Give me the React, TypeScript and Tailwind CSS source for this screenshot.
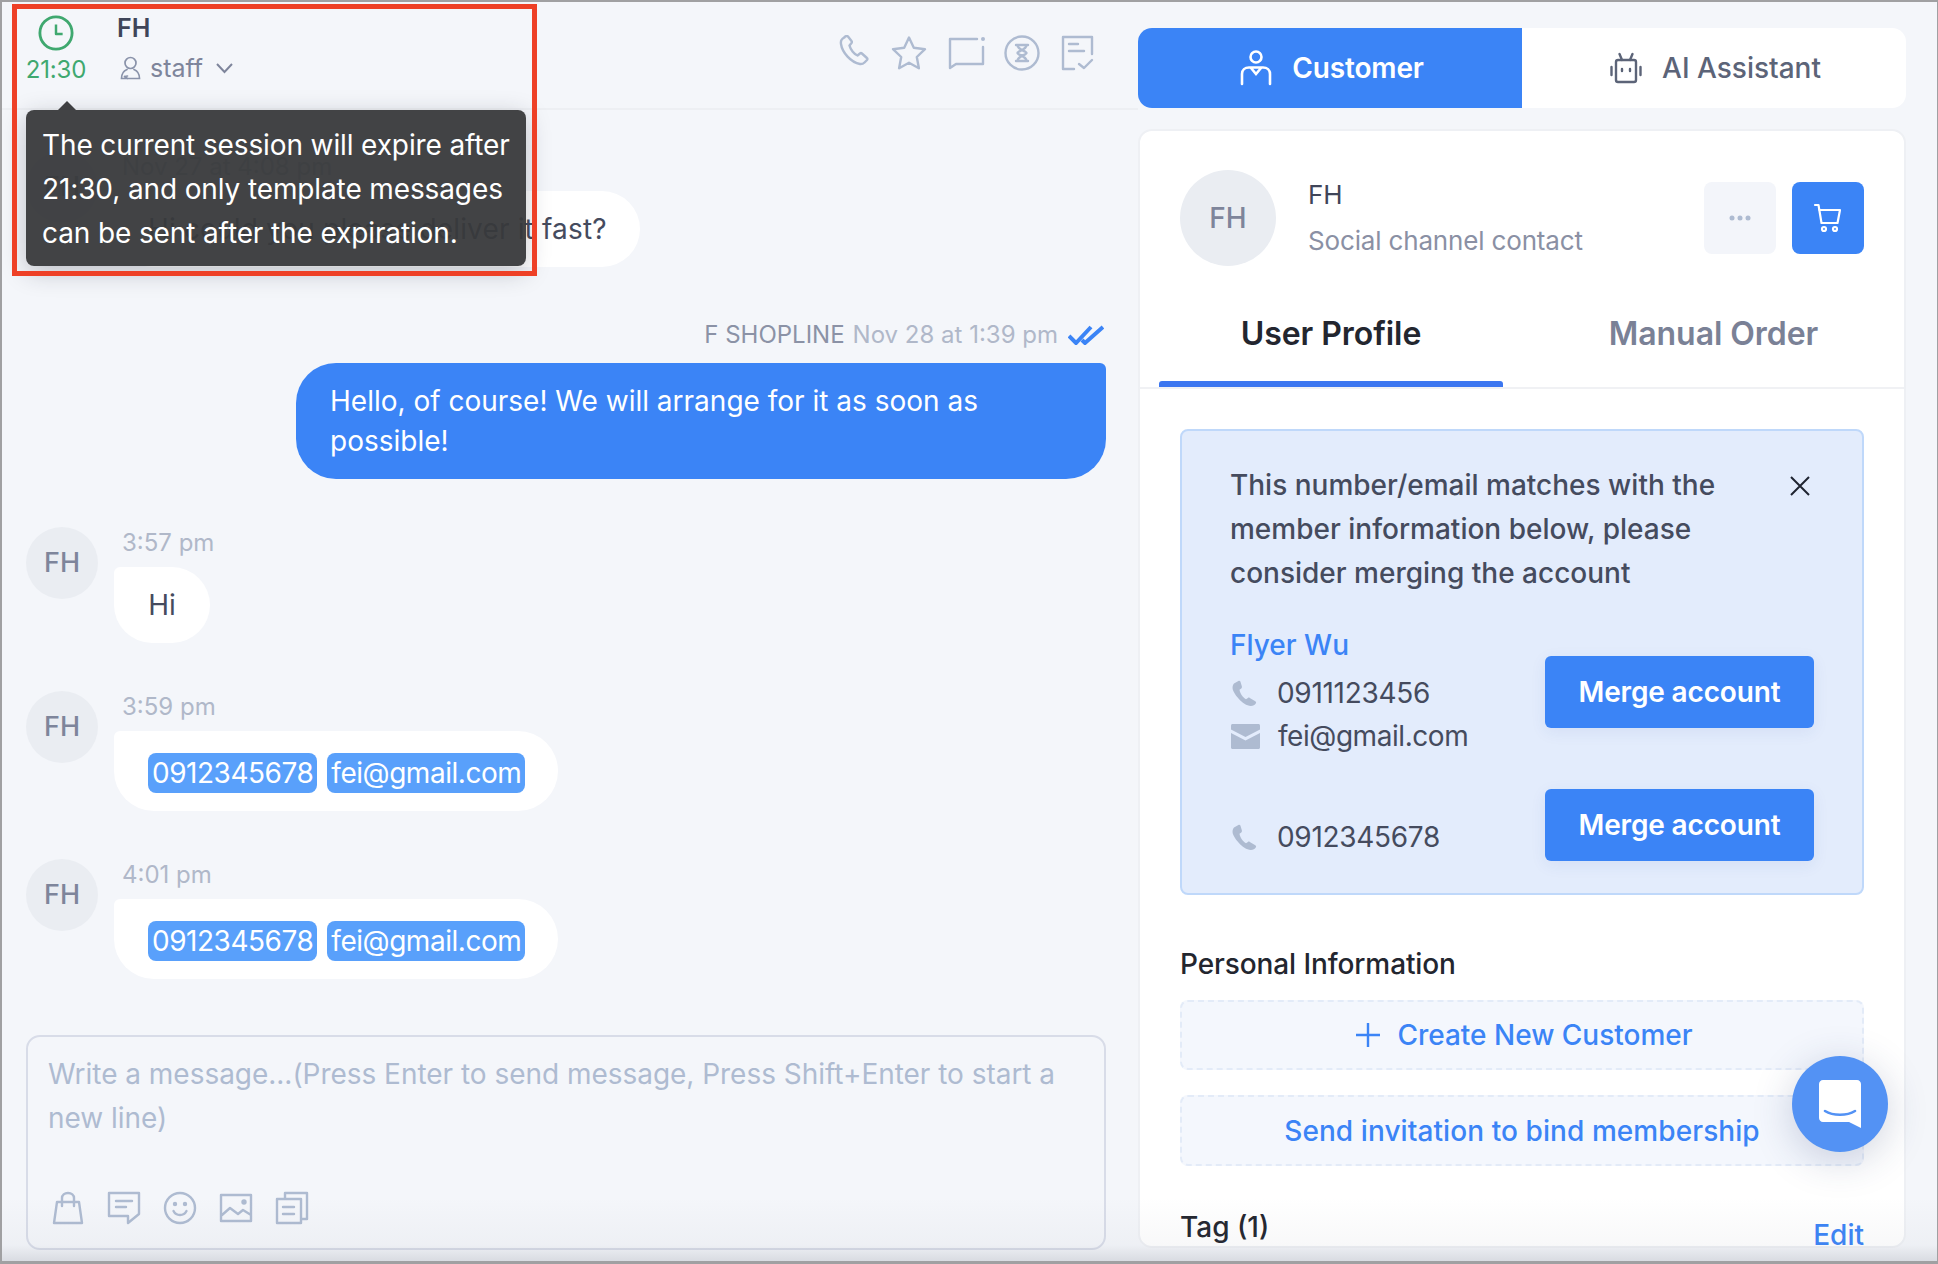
import React from 'react';

const LineIcon: React.FC<{ className?: string; box?: string; children: React.ReactNode }> = ({ className, box = '0 0 32 32', children }) => (
    <svg className={className} viewBox={box} fill="none" stroke="currentColor" strokeWidth="2.4" strokeLinecap="round" strokeLinejoin="round" aria-hidden="true">
        {children}
    </svg>
);

const SolidPhone: React.FC<{ className?: string }> = ({ className }) => (
    <svg className={className} viewBox="0 0 26 26" fill="#aebbd1" aria-hidden="true">
        <path d="M2 3.6 6.4 1c.8-.4 1.600-.2 2 .6l1.500 5c.2.800 0 1.400-.6 1.900l-1.800 1.300c.6 3.700 3.400 7.800 6.500 9.500l1.900-1.400c.6-.4 1.300-.4 1.900 0l5.500 3.300c.8.500 1 1.300.6 2-1 1.700-2.800 2.800-5 2.800C10.500 25.900 1 13 .6 8.600.4 6.500.9 4.700 2 3.600Z" />
    </svg>
);

const Avatar = () => (
    <div className="flex h-[72px] w-[72px] shrink-0 items-center justify-center rounded-full bg-[#eaedf2] text-[27px] font-medium text-[#7e859b]">FH</div>
);

const Chip: React.FC<{ children: React.ReactNode }> = ({ children }) => (
    <span className="flex h-10 items-center rounded-lg bg-[#59a0fb] px-1 text-[28px] tracking-[-0.47px] text-white">{children}</span>
);

const IncomingMessage: React.FC<{ time: string; className?: string; children: React.ReactNode }> = ({ time, className, children }) => (
    <div className={`flex gap-[16px] ${className ?? ''}`}>
        <Avatar />
        <div>
            <div className="h-8 pl-2 text-[24px] leading-8 text-[#b0b8c9]">{time}</div>
            {children}
        </div>
    </div>
);

const ContactChips = () => (
    <div className="mt-2 flex h-20 w-[444px] items-center gap-[10px] rounded-[40px] rounded-tl-md bg-white pt-1 pl-[34px]">
        <Chip>0912345678</Chip>
        <Chip>fei@gmail.com</Chip>
    </div>
);

const MergeButton = () => (
    <button className="flex h-[72px] w-[269px] items-center justify-center rounded-md bg-[#3b84f6] text-[28px] font-semibold tracking-[-0.15px] text-white shadow-[0_4px_16px_rgba(40,80,160,0.08)]">
        Merge account
    </button>
);

export default function App() {
    return (
        <div className="relative flex h-[1264px] w-[1938px] overflow-hidden border-t-2 border-r border-b-[3px] border-l-2 border-[#a0a0a2] bg-[#f4f6fa] font-['Inter',sans-serif] text-[#454b5e]">
            {/* chat column */}
            <div className="flex w-[1136px] shrink-0 flex-col">
                <div className="flex h-[108px] shrink-0 border-b-2 border-[#edeff3] pr-[44px] pl-[25px]">
                    <div className="flex w-[58px] flex-col items-center pt-[13px]">
                        <svg className="h-[36px] w-[36px] text-[#3fa86f]" viewBox="0 0 38 38" fill="none" stroke="currentColor" strokeWidth="3" aria-hidden="true">
                            <circle cx="19" cy="19" r="17" />
                            <path d="M19 10v10h7" strokeWidth="2.600" strokeLinejoin="round" />
                        </svg>
                        <div className="mt-[3px] text-[24px] leading-8 tracking-[-0.2px] text-[#3fa86f]">21:30</div>
                    </div>
                    <div className="ml-[32px] pt-[10px]">
                        <div className="text-[25px] leading-8 font-semibold text-[#3f4559]">FH</div>
                        <div className="mt-[8px] flex items-center text-[25px] leading-8 text-[#7e859b]">
                            <svg className="mr-[9px] ml-[3px] h-[24px] w-[21px] text-[#8a93aa]" viewBox="0 0 21 24" fill="none" stroke="currentColor" strokeWidth="1.700" strokeLinecap="round" aria-hidden="true">
                                <circle cx="10.500" cy="7" r="5.500" />
                                <path d="M7 13.500C3.500 15 1.500 18.500 1.500 22.500h18C19.500 18.500 17.500 15 14 13.500M4.500 20.500l3 2M7.500 20l-3 .5" />
                            </svg>
                            staff
                            <svg className="ml-[12px] h-[12px] w-[19px] text-[#7e859b]" viewBox="0 0 19 12" fill="none" stroke="currentColor" strokeWidth="2" aria-hidden="true">
                                <path d="M2 2l7.500 8L17 2" />
                            </svg>
                        </div>
                    </div>
                    <div className="ml-auto flex items-start gap-[21px] pt-[33px] text-[#aebbd1]">
                        <LineIcon className="h-[32px] w-[32px]">
                            <path d="M6.500 2.500c-2.500 1-4 3.500-3.500 6.500 1.200 8.500 10 18.500 19 20 2 .2 3.500-.5 4.500-1.500l2.500-2.500c.6-.7.5-1.500-.1-2l-5-4.500c-.6-.5-1.300-.5-1.900 0l-2.500 2c-3.500-1.500-7-6-8-10l2-2.500c.5-.7.5-1.400 0-2l-3.500-4.500c-1-.7-2-.8-3.500.5Z" />
                        </LineIcon>
                        <LineIcon className="h-[36px] w-[36px]" box="0 0 36 36">
                            <path d="M18 2.500l4.800 10.200 11.200 1.500-8.200 7.800 2.100 11.200L18 27.700 8.100 33.200l2.100-11.200L2 14.200l11.200-1.500L18 2.500Z" />
                        </LineIcon>
                        <LineIcon className="mr-[-2px] h-[36px] w-[37px]" box="0 0 37 36">
                            <path d="M29 4H2v29l6-4h27V12" />
                            <circle cx="35" cy="4" r="2" fill="currentColor" stroke="none" />
                        </LineIcon>
                        <LineIcon className="h-[36px] w-[36px]" box="0 0 36 36">
                            <circle cx="18" cy="18" r="16.500" />
                            <path d="M12 10h12M12 26h12M13.500 10c0 5 9 6 9 8s-9 3-9 8M22.500 10c0 5-9 6-9 8s9 3 9 8" />
                        </LineIcon>
                        <LineIcon className="h-[36px] w-[33px]" box="0 0 33 36">
                            <path d="M31 19V2H2v32h11M8 9h9M8 16h15M18 29l5 4 8-8" />
                        </LineIcon>
                    </div>
                </div>

                <div className="flex flex-1 flex-col pr-[32px] pl-[24px]">
                    <IncomingMessage time="Nov 27 at 4:08 pm" className="mt-[41px]">
                        <div className="mt-2 flex h-[76px] w-[526px] items-center rounded-[38px] rounded-tl-md bg-white pl-[34px] text-[28px] tracking-[0.16px]">Hi could you please deliver it fast?</div>
                    </IncomingMessage>

                    <div className="mt-[52px] flex h-8 items-center justify-end text-[24px] text-[#b0b8c9]">
                        <span className="text-[#8b92a6]">F SHOPLINE</span>
                        <span className="ml-2">Nov 28 at 1:39 pm</span>
                        <svg className="mr-[2px] ml-[10px] h-[20px] w-[36px] text-[#3b84f6]" viewBox="0 0 36 20" fill="none" stroke="currentColor" strokeWidth="4" aria-hidden="true">
                            <path d="M1 11l7 7L23 2M14 15l3 3L35 2" />
                        </svg>
                    </div>
                    <div className="mt-3 ml-auto h-[116px] w-[810px] rounded-[40px] rounded-tr-md bg-[#3b84f6] px-[34px] pt-[18px] text-[28px] leading-10 text-white">
                        Hello, of course! We will arrange for it as soon as possible!
                    </div>

                    <IncomingMessage time="3:57 pm" className="mt-12">
                        <div className="mt-2 flex h-[76px] w-[96px] items-center justify-center rounded-[38px] rounded-tl-md bg-white text-[28px]">Hi</div>
                    </IncomingMessage>
                    <IncomingMessage time="3:59 pm" className="mt-12">
                        <ContactChips />
                    </IncomingMessage>
                    <IncomingMessage time="4:01 pm" className="mt-12">
                        <ContactChips />
                    </IncomingMessage>

                    <div className="mt-14 h-[215px] rounded-[14px] border-2 border-[#d8dce8] pt-[15px] pr-[20px] pl-[20px]">
                        <div className="text-[28px] leading-[44px] tracking-[-0.03px] text-[#aebbd1]">
                            Write a message...(Press Enter to send message, Press Shift+Enter to start a new line)
                        </div>
                        <div className="mt-[51px] flex items-center gap-[22px] pl-[3px] text-[#aebbd1]">
                            <LineIcon className="h-[34px] w-[34px]" box="0 0 34 34">
                                <path d="M6 11h22l3 21H3L6 11ZM11 15V7c0-3 2.500-5 6-5s6 2 6 5v8" />
                            </LineIcon>
                            <LineIcon className="h-[34px] w-[34px]" box="0 0 34 34">
                                <path d="M2 2h30v21l-11 9v-7H2V2ZM9 10h16M9 16h10" />
                            </LineIcon>
                            <LineIcon className="h-[34px] w-[34px]" box="0 0 34 34">
                                <circle cx="17" cy="17" r="15" />
                                <path d="M10.500 20c1.500 3 3.800 4 6.500 4s5-1 6.500-4" />
                                <circle cx="12" cy="13" r="1" fill="currentColor" />
                                <circle cx="22" cy="13" r="1" fill="currentColor" />
                            </LineIcon>
                            <LineIcon className="h-[34px] w-[34px]" box="0 0 34 34">
                                <path d="M2 4h30v26H2V4ZM3 24l8-7 8 6 5-4 8 5" />
                                <circle cx="25" cy="11" r="1.500" fill="currentColor" />
                            </LineIcon>
                            <LineIcon className="h-[34px] w-[34px]" box="0 0 34 34">
                                <path d="M10 8V2h22v26h-6M2 8h24v24H2V8ZM8 16h11M8 23h11" />
                            </LineIcon>
                        </div>
                    </div>
                </div>
            </div>

            {/* customer column */}
            <div className="flex w-[768px] shrink-0 flex-col pt-[26px]">
                <div className="flex h-20 shrink-0 overflow-hidden rounded-[14px] bg-white">
                    <div className="flex w-[384px] items-center justify-center gap-[20px] bg-[#3b84f6] pl-1 text-[28px] font-semibold tracking-[-0.12px] text-white">
                        <svg className="h-[36px] w-[32px]" viewBox="0 0 32 36" fill="none" stroke="currentColor" strokeWidth="2.600" strokeLinecap="round" aria-hidden="true">
                            <circle cx="16" cy="7" r="5.500" />
                            <path d="M2 34V24c0-4 3-6.500 7-6.500h14c4 0 7 2.500 7 6.500v10M11 18l5 6 5-6" />
                        </svg>
                        Customer
                    </div>
                    <div className="flex flex-1 items-center justify-center gap-[20px] pl-[3px] text-[28px] font-medium text-[#5c6478]">
                        <svg className="h-[32px] w-[32px]" viewBox="0 0 32 32" fill="none" stroke="currentColor" strokeWidth="2.400" strokeLinecap="round" aria-hidden="true">
                            <rect x="6" y="8" width="20" height="22" rx="2" />
                            <path d="M12 8 9.500 2M20 8l2.500-6M1.500 15v8M30.500 15v8M12 17v2M20 17v2" />
                        </svg>
                        AI Assistant
                    </div>
                </div>

                <div className="mt-[21px] h-[1119px] shrink-0 overflow-hidden rounded-[14px] border-2 border-[#eef0f4] bg-white px-[40px] pt-[39px]">
                    <div className="flex h-24 items-center">
                        <div className="flex h-24 w-24 items-center justify-center rounded-full bg-[#eaedf2] text-[28px] font-medium text-[#7e859b]">FH</div>
                        <div className="ml-8">
                            <div className="text-[26px] leading-[46px] text-[#3f4559]">FH</div>
                            <div className="text-[26px] leading-[46px] tracking-[-0.16px] text-[#8a90a4]">Social channel contact</div>
                        </div>
                        <div className="ml-auto flex gap-4">
                            <div className="flex h-[72px] w-[72px] items-center justify-center rounded-lg bg-[#f3f5fa] text-[#aebbd1]">
                                <svg className="h-[6px] w-[22px]" viewBox="0 0 22 6" fill="currentColor" aria-hidden="true">
                                    <circle cx="3" cy="3" r="2.500" />
                                    <circle cx="11" cy="3" r="2.500" />
                                    <circle cx="19" cy="3" r="2.500" />
                                </svg>
                            </div>
                            <div className="flex h-[72px] w-[72px] items-center justify-center rounded-lg bg-[#3b84f6] text-white">
                                <svg className="h-[30px] w-[30px]" viewBox="0 0 30 30" fill="none" stroke="currentColor" strokeWidth="2.200" strokeLinecap="round" strokeLinejoin="round" aria-hidden="true">
                                    <path d="M2 2h3.500l3 18h16l2.500-13H6" />
                                    <circle cx="11" cy="26" r="2" />
                                    <circle cx="22" cy="26" r="2" />
                                </svg>
                            </div>
                        </div>
                    </div>

                    <div className="mx-[-40px] mt-[35px] flex border-b-2 border-[#f0f1f4] pl-[19px]">
                        <div className="w-[344px]">
                            <div className="h-[64px] pt-[1px] text-center text-[32px] leading-[64px] font-semibold tracking-[-0.05px] text-[#23262f]">User Profile</div>
                            <div className="mt-4 h-[6px] rounded-t-[3px] bg-[#3b76f0]" />
                        </div>
                        <div className="ml-5 h-[64px] flex-1 pt-[1px] text-center text-[32px] leading-[64px] font-semibold tracking-[-0.05px] text-[#7a8196]">Manual Order</div>
                    </div>

                    <div className="mt-[40px] h-[466px] rounded-lg border-2 border-[#bfd8fa] bg-[#e3ecfc] px-[48px] pt-[32px]">
                        <div className="flex justify-between">
                            <div className="w-[500px] text-[28px] leading-[44px] font-medium text-[#454b5e]">
                                This number/email matches with the member information below, please consider merging the account
                            </div>
                            <svg className="mt-[13px] mr-[4px] h-[20px] w-[20px] text-[#1f2430]" viewBox="0 0 20 20" fill="none" stroke="currentColor" strokeWidth="2" aria-hidden="true">
                                <path d="M1 1l18 18M19 1 1 19" />
                            </svg>
                        </div>
                        <div className="mt-[32px] flex justify-between">
                            <div>
                                <div className="text-[28px] leading-9 font-medium text-[#3b84f6]">Flyer Wu</div>
                                <div className="mt-3 flex h-9 items-center text-[28px] tracking-[-0.3px]">
                                    <SolidPhone className="mr-[19px] ml-[2px] h-[26px] w-[26px]" />
                                    0911123456
                                </div>
                                <div className="mt-[7px] flex h-9 items-center text-[28px] tracking-[-0.45px]">
                                    <svg className="mr-[18px] ml-[1px] h-[25px] w-[29px]" viewBox="0 0 29 25" fill="#aebbd1" aria-hidden="true">
                                        <path d="M1.500 0h26c.8 0 1.500.7 1.500 1.500v4L14.500 13 0 5.500v-4C0 .7.700 0 1.500 0Z" />
                                        <path d="M0 9l14.500 7.500L29 9v14.500c0 .8-.7 1.500-1.500 1.500h-26C.7 25 0 24.300 0 23.500V9Z" />
                                    </svg>
                                    fei@gmail.com
                                </div>
                            </div>
                            <div className="mt-[29px]">
                                <MergeButton />
                            </div>
                        </div>
                        <div className="mt-[35px] flex items-end justify-between">
                            <div className="mb-[6px] flex h-9 items-center text-[28px] tracking-[-0.3px]">
                                <SolidPhone className="mr-[19px] ml-[2px] h-[26px] w-[26px]" />
                                0912345678
                            </div>
                            <MergeButton />
                        </div>
                    </div>

                    <div className="mt-[51px] text-[28px] leading-9 font-medium tracking-[-0.1px] text-[#23262f]">Personal Information</div>
                    <div className="mt-[18px] flex h-[70px] items-center justify-center gap-[16px] rounded-lg border-2 border-dashed border-[#e3ebf8] bg-[#f4f7fd] pl-[4px] text-[28px] font-medium text-[#3b84f6]">
                        <svg className="h-[26px] w-[26px]" viewBox="0 0 26 26" fill="none" stroke="currentColor" strokeWidth="2.400" aria-hidden="true">
                            <path d="M13 1v24M1 13h24" />
                        </svg>
                        Create New Customer
                    </div>
                    <div className="mt-[25px] flex h-[71px] items-center justify-center rounded-lg border-2 border-dashed border-[#e3ebf8] bg-[#f4f7fd] text-[28px] font-medium tracking-[0.08px] text-[#3b84f6]">
                        Send invitation to bind membership
                    </div>
                    <div className="mt-[43px] flex items-start justify-between text-[28px] leading-9 font-medium">
                        <span className="text-[#23262f]">Tag (1)</span>
                        <span className="mt-2 text-[#3b84f6]">Edit</span>
                    </div>
                </div>
            </div>

            {/* session tooltip, its annotation frame and the floating launcher */}
            <div className="absolute top-[108px] left-[24px] w-[500px] rounded-lg bg-[#38393b]/95 pt-[13px] pr-2 pb-[11px] pl-4 text-[28px] leading-[44px] tracking-[-0.12px] text-white shadow-[0_6px_24px_rgba(30,35,50,0.25)]">
                <div className="absolute top-[-9px] left-[32px] h-0 w-0 border-x-[9px] border-b-[9px] border-x-transparent border-b-[#3e3f41]" />
                The current session will expire after 21:30, and only template messages can be sent after the expiration.
            </div>
            <div className="pointer-events-none absolute top-[2px] left-[10px] h-[272px] w-[525px] border-[5px] border-[#ee4026]" />
            <div className="absolute top-[1054px] left-[1790px] flex h-24 w-24 items-center justify-center rounded-full bg-[#5392f4] shadow-[0_8px_40px_rgba(40,60,110,0.22)]">
                <svg className="h-[48px] w-[42px]" viewBox="0 0 42 48" aria-hidden="true">
                    <path d="M4 0h34c2.200 0 4 1.800 4 4v44l-12-6H4c-2.200 0-4-1.800-4-4V4c0-2.200 1.800-4 4-4Z" fill="#fff" />
                    <path d="M6 31c8 5 22 5 30 0" fill="none" stroke="#5392f4" strokeWidth="2.600" strokeLinecap="round" />
                </svg>
            </div>
            <div className="pointer-events-none absolute right-0 bottom-0 left-0 h-[64px] bg-[linear-gradient(to_bottom,transparent,rgba(120,125,140,0.05)_75%,rgba(120,125,140,0.22))]" />
        </div>
    );
}
